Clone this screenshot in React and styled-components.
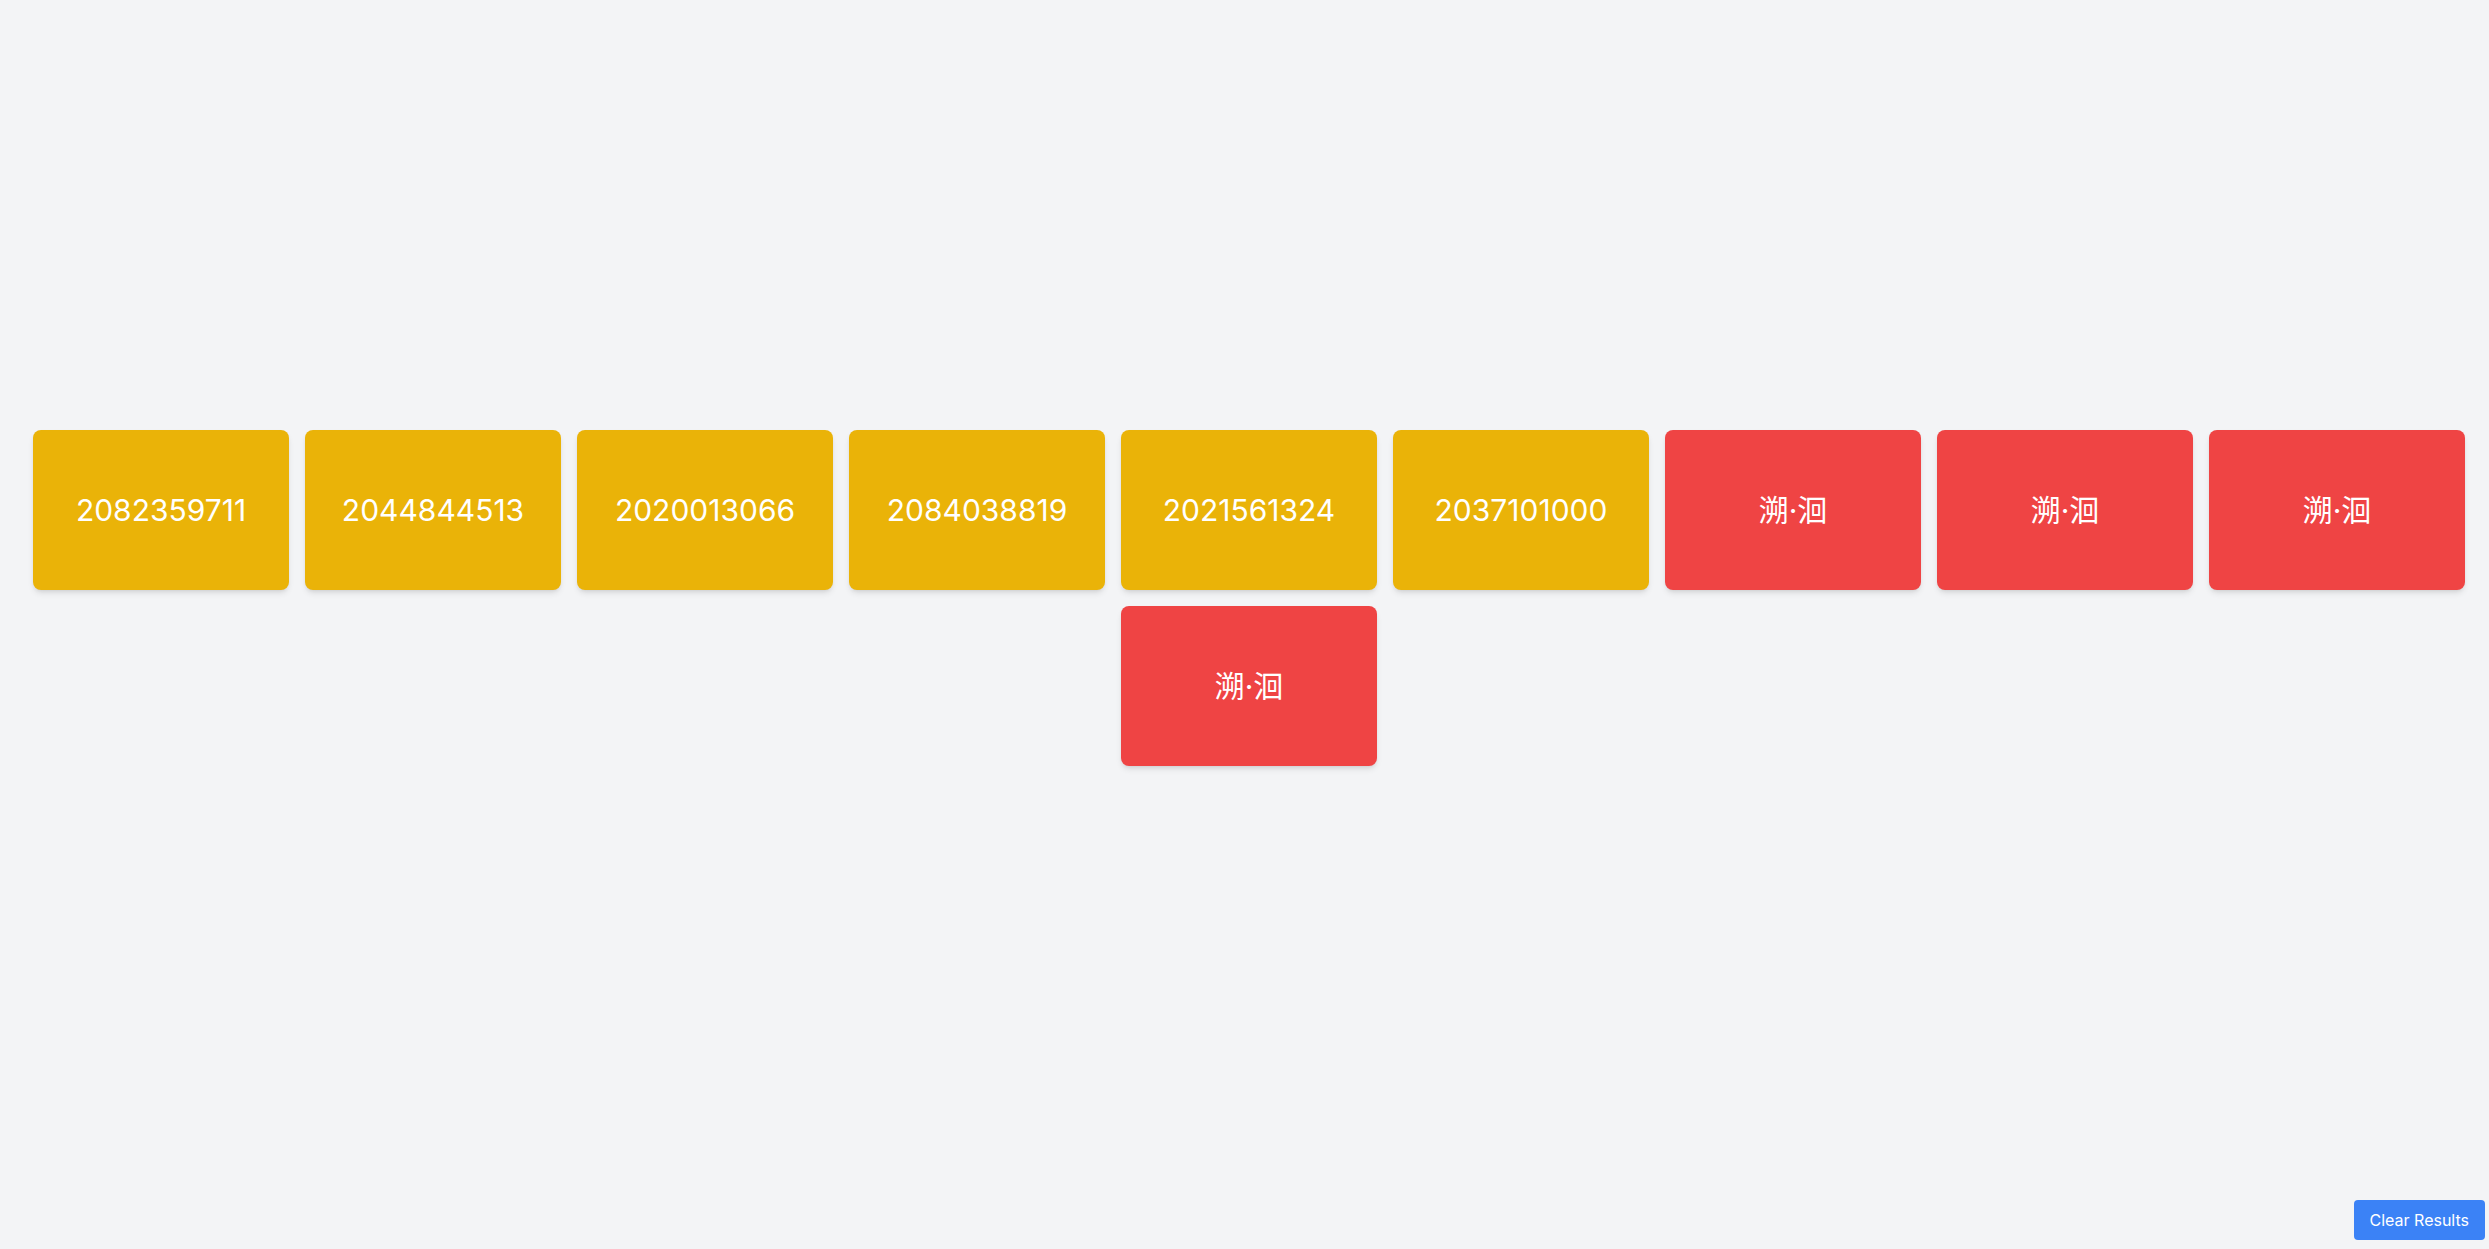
import React from "react";
import styled, { createGlobalStyle } from "styled-components";

const Global = createGlobalStyle`
  html, body { margin: 0; padding: 0; background: #f3f4f6; }
  body { font-family: Inter, "Noto Sans CJK SC", sans-serif; }
`;

const Page = styled.main`
  min-height: 100vh;
  box-sizing: border-box;
  padding: 0 0 54px 9px;
  display: flex;
  align-items: center;
  justify-content: center;
`;

const Grid = styled.div`
  display: flex;
  flex-wrap: wrap;
  justify-content: center;
  gap: 16px;
`;

const Card = styled.div`
  width: 256px;
  height: 160px;
  border-radius: 8px;
  background: ${(p) => (p.$variant === "code" ? "#eab308" : "#ef4444")};
  box-shadow: 0 4px 6px -1px rgba(0, 0, 0, 0.1), 0 2px 4px -2px rgba(0, 0, 0, 0.1);
  display: flex;
  align-items: center;
  justify-content: center;
  color: #ffffff;
  font-family: Inter, "Noto Sans CJK SC", sans-serif;
  font-size: 30px;
  line-height: 36px;
`;

const ClearButton = styled.button`
  position: fixed;
  right: 4px;
  bottom: 9px;
  height: 40px;
  padding: 0 16px;
  border: none;
  border-radius: 4px;
  background: #3b82f6;
  color: #ffffff;
  font-family: Inter, sans-serif;
  font-size: 16px;
  cursor: pointer;
`;

const items = [
  "2082359711",
  "2044844513",
  "2020013066",
  "2084038819",
  "2021561324",
  "2037101000",
  null,
  null,
  null,
  null,
];

export default function App() {
  return (
    <>
      <Global />
      <Page>
        <Grid>
          {items.map((v, i) => (
            <Card key={i} $variant={v ? "code" : "miss"}>
              {v || "溯·洄"}
            </Card>
          ))}
        </Grid>
      </Page>
      <ClearButton>Clear Results</ClearButton>
    </>
  );
}
